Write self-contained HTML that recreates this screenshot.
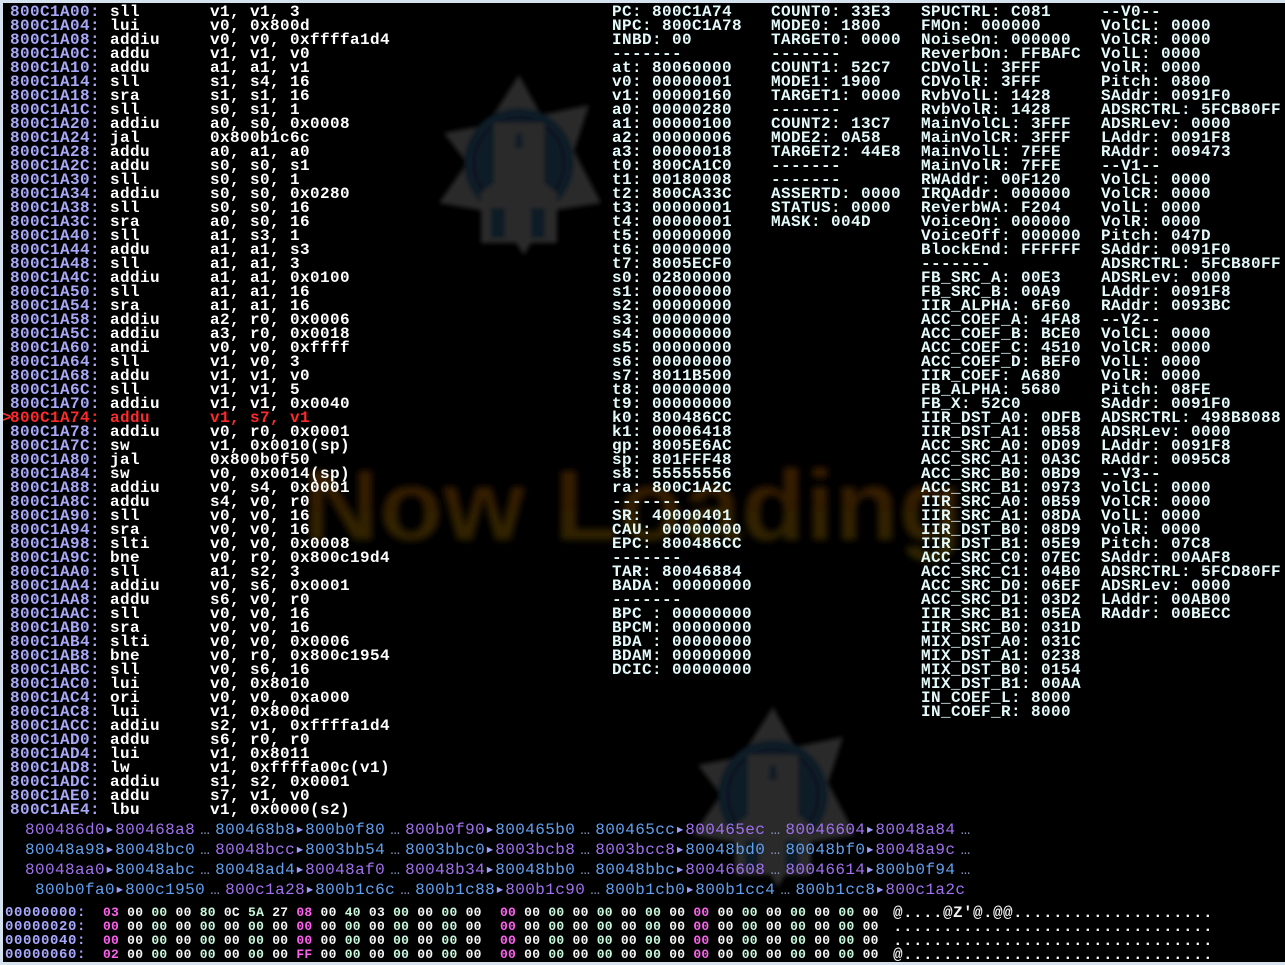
<!DOCTYPE html>
<html><head><meta charset="utf-8"><style>
html,body{margin:0;padding:0;}
body{width:1285px;height:965px;background:#d6e2ee;position:relative;overflow:hidden;}
#scr{position:absolute;left:3px;top:3px;width:1282px;height:959px;background:#000;overflow:hidden;}
pre{position:absolute;margin:0;font-family:"Liberation Mono",monospace;font-size:16px;font-weight:bold;line-height:14px;letter-spacing:0.4px;color:#fff;white-space:pre;}
.a{color:#a8a8f8}
.r{color:#ff2a2a}
.g{color:#e4fafa}
.cs{position:absolute;font-family:"Liberation Mono",monospace;font-size:16px;line-height:16px;letter-spacing:0.4px;white-space:pre;color:#7080c0}
.P{color:#a070f0}.B{color:#60a0f0}.ar{color:#a0a0ff}.el{color:#8090b0;display:inline-block;width:20px;text-align:center;letter-spacing:0}
.hx{position:absolute;margin:0;font-family:"Liberation Mono",monospace;font-size:13px;font-weight:bold;line-height:14px;white-space:pre;letter-spacing:0.25px;}
.w{color:#f4f4f4}.m{color:#c8f8dc}.k{color:#ff60f0}.ha{color:#a8a8ff}
</style></head><body>
<div id="scr">
<svg width="1282" height="959" style="position:absolute;left:0;top:0">
<defs>
<filter id="bl"><feGaussianBlur stdDeviation="2.5"/></filter>
<filter id="bl2"><feGaussianBlur stdDeviation="3.5"/></filter>
<linearGradient id="og" x1="0" y1="0" x2="0" y2="1"><stop offset="0" stop-color="#3a1800"/><stop offset="1" stop-color="#2c2600"/></linearGradient>
<g id="logo">
<polygon points="0,-88 22,-48 70,-58 55,-12 82,40 30,48 5,92 -22,50 -80,40 -52,0 -75,-30 -32,-38" fill="#2a2a2a"/>
<circle r="55" fill="#0c1a28"/>
<circle r="45" fill="none" stroke="#0a1420" stroke-width="4"/>
<path d="M-25,-40 L25,-40 L25,20 L38,30 L38,80 L-38,80 L-38,30 L-25,20 Z" fill="#2a2a2a"/>
<rect x="-28" y="45" width="14" height="30" fill="#0c1a28"/><rect x="12" y="45" width="14" height="30" fill="#0c1a28"/>
<path d="M-3,-30 L3,-30 L4,-15 L-4,-15Z" fill="#0c1a28"/>
</g>
</defs>
<use href="#logo" x="516" y="160" filter="url(#bl)"/>
<use href="#logo" x="770" y="792" filter="url(#bl)"/>
<text x="300" y="537" font-family="Liberation Sans,sans-serif" font-weight="bold" font-size="100" textLength="660" lengthAdjust="spacingAndGlyphs" fill="url(#og)" filter="url(#bl2)">Now Loading</text>
</svg>

<pre style="left:7px;top:2px"><span class="a">800C1A00:</span> sll       v1, v1, 3
<span class="a">800C1A04:</span> lui       v0, 0x800d
<span class="a">800C1A08:</span> addiu     v0, v0, 0xffffa1d4
<span class="a">800C1A0C:</span> addu      v1, v1, v0
<span class="a">800C1A10:</span> addu      a1, a1, v1
<span class="a">800C1A14:</span> sll       s1, s4, 16
<span class="a">800C1A18:</span> sra       s1, s1, 16
<span class="a">800C1A1C:</span> sll       s0, s1, 1
<span class="a">800C1A20:</span> addiu     a0, s0, 0x0008
<span class="a">800C1A24:</span> jal       0x800b1c6c
<span class="a">800C1A28:</span> addu      a0, a1, a0
<span class="a">800C1A2C:</span> addu      s0, s0, s1
<span class="a">800C1A30:</span> sll       s0, s0, 1
<span class="a">800C1A34:</span> addiu     s0, s0, 0x0280
<span class="a">800C1A38:</span> sll       s0, s0, 16
<span class="a">800C1A3C:</span> sra       a0, s0, 16
<span class="a">800C1A40:</span> sll       a1, s3, 1
<span class="a">800C1A44:</span> addu      a1, a1, s3
<span class="a">800C1A48:</span> sll       a1, a1, 3
<span class="a">800C1A4C:</span> addiu     a1, a1, 0x0100
<span class="a">800C1A50:</span> sll       a1, a1, 16
<span class="a">800C1A54:</span> sra       a1, a1, 16
<span class="a">800C1A58:</span> addiu     a2, r0, 0x0006
<span class="a">800C1A5C:</span> addiu     a3, r0, 0x0018
<span class="a">800C1A60:</span> andi      v0, v0, 0xffff
<span class="a">800C1A64:</span> sll       v1, v0, 3
<span class="a">800C1A68:</span> addu      v1, v1, v0
<span class="a">800C1A6C:</span> sll       v1, v1, 5
<span class="a">800C1A70:</span> addiu     v1, v1, 0x0040
<span class="r">800C1A74: addu      v1, s7, v1</span>
<span class="a">800C1A78:</span> addiu     v0, r0, 0x0001
<span class="a">800C1A7C:</span> sw        v1, 0x0010(sp)
<span class="a">800C1A80:</span> jal       0x800b0f50
<span class="a">800C1A84:</span> sw        v0, 0x0014(sp)
<span class="a">800C1A88:</span> addiu     v0, s4, 0x0001
<span class="a">800C1A8C:</span> addu      s4, v0, r0
<span class="a">800C1A90:</span> sll       v0, v0, 16
<span class="a">800C1A94:</span> sra       v0, v0, 16
<span class="a">800C1A98:</span> slti      v0, v0, 0x0008
<span class="a">800C1A9C:</span> bne       v0, r0, 0x800c19d4
<span class="a">800C1AA0:</span> sll       a1, s2, 3
<span class="a">800C1AA4:</span> addiu     v0, s6, 0x0001
<span class="a">800C1AA8:</span> addu      s6, v0, r0
<span class="a">800C1AAC:</span> sll       v0, v0, 16
<span class="a">800C1AB0:</span> sra       v0, v0, 16
<span class="a">800C1AB4:</span> slti      v0, v0, 0x0006
<span class="a">800C1AB8:</span> bne       v0, r0, 0x800c1954
<span class="a">800C1ABC:</span> sll       v0, s6, 16
<span class="a">800C1AC0:</span> lui       v0, 0x8010
<span class="a">800C1AC4:</span> ori       v0, v0, 0xa000
<span class="a">800C1AC8:</span> lui       v1, 0x800d
<span class="a">800C1ACC:</span> addiu     s2, v1, 0xffffa1d4
<span class="a">800C1AD0:</span> addu      s6, r0, r0
<span class="a">800C1AD4:</span> lui       v1, 0x8011
<span class="a">800C1AD8:</span> lw        v1, 0xffffa00c(v1)
<span class="a">800C1ADC:</span> addiu     s1, s2, 0x0001
<span class="a">800C1AE0:</span> addu      s7, v1, v0
<span class="a">800C1AE4:</span> lbu       v1, 0x0000(s2)</pre>
<pre class="r" style="left:-1px;top:408px;color:#ff2a2a">&gt;</pre>

<pre class="g" style="left:609px;top:2px">PC: 800C1A74
NPC: 800C1A78
INBD: 00
-------
at: 80060000
v0: 00000001
v1: 00000160
a0: 00000280
a1: 00000100
a2: 00000006
a3: 00000018
t0: 800CA1C0
t1: 00180008
t2: 800CA33C
t3: 00000001
t4: 00000001
t5: 00000000
t6: 00000000
t7: 8005ECF0
s0: 02800000
s1: 00000000
s2: 00000000
s3: 00000000
s4: 00000000
s5: 00000000
s6: 00000000
s7: 8011B500
t8: 00000000
t9: 00000000
k0: 800486CC
k1: 00006418
gp: 8005E6AC
sp: 801FFF48
s8: 55555556
ra: 800C1A2C
-------
SR: 40000401
CAU: 00000000
EPC: 800486CC
-------
TAR: 80046884
BADA: 00000000
-------
BPC : 00000000
BPCM: 00000000
BDA : 00000000
BDAM: 00000000
DCIC: 00000000</pre>

<pre class="g" style="left:768px;top:2px">COUNT0: 33E3
MODE0: 1800
TARGET0: 0000
-------
COUNT1: 52C7
MODE1: 1900
TARGET1: 0000
-------
COUNT2: 13C7
MODE2: 0A58
TARGET2: 44E8
-------
-------
ASSERTD: 0000
STATUS: 0000
MASK: 004D</pre>

<pre class="g" style="left:918px;top:2px">SPUCTRL: C081
FMOn: 000000
NoiseOn: 000000
ReverbOn: FFBAFC
CDVolL: 3FFF
CDVolR: 3FFF
RvbVolL: 1428
RvbVolR: 1428
MainVolCL: 3FFF
MainVolCR: 3FFF
MainVolL: 7FFE
MainVolR: 7FFE
RWAddr: 00F120
IRQAddr: 000000
ReverbWA: F204
VoiceOn: 000000
VoiceOff: 000000
BlockEnd: FFFFFF
-------
FB_SRC_A: 00E3
FB_SRC_B: 00A9
IIR_ALPHA: 6F60
ACC_COEF_A: 4FA8
ACC_COEF_B: BCE0
ACC_COEF_C: 4510
ACC_COEF_D: BEF0
IIR_COEF: A680
FB_ALPHA: 5680
FB_X: 52C0
IIR_DST_A0: 0DFB
IIR_DST_A1: 0B58
ACC_SRC_A0: 0D09
ACC_SRC_A1: 0A3C
ACC_SRC_B0: 0BD9
ACC_SRC_B1: 0973
IIR_SRC_A0: 0B59
IIR_SRC_A1: 08DA
IIR_DST_B0: 08D9
IIR_DST_B1: 05E9
ACC_SRC_C0: 07EC
ACC_SRC_C1: 04B0
ACC_SRC_D0: 06EF
ACC_SRC_D1: 03D2
IIR_SRC_B1: 05EA
IIR_SRC_B0: 031D
MIX_DST_A0: 031C
MIX_DST_A1: 0238
MIX_DST_B0: 0154
MIX_DST_B1: 00AA
IN_COEF_L: 8000
IN_COEF_R: 8000</pre>

<pre class="g" style="left:1098px;top:2px">--V0--
VolCL: 0000
VolCR: 0000
VolL: 0000
VolR: 0000
Pitch: 0800
SAddr: 0091F0
ADSRCTRL: 5FCB80FF
ADSRLev: 0000
LAddr: 0091F8
RAddr: 009473
--V1--
VolCL: 0000
VolCR: 0000
VolL: 0000
VolR: 0000
Pitch: 047D
SAddr: 0091F0
ADSRCTRL: 5FCB80FF
ADSRLev: 0000
LAddr: 0091F8
RAddr: 0093BC
--V2--
VolCL: 0000
VolCR: 0000
VolL: 0000
VolR: 0000
Pitch: 08FE
SAddr: 0091F0
ADSRCTRL: 498B8088
ADSRLev: 0000
LAddr: 0091F8
RAddr: 0095C8
--V3--
VolCL: 0000
VolCR: 0000
VolL: 0000
VolR: 0000
Pitch: 07C8
SAddr: 00AAF8
ADSRCTRL: 5FCD80FF
ADSRLev: 0000
LAddr: 00AB00
RAddr: 00BECC</pre>

<div class="cs" style="left:22px;top:819px"><span class="P">800486d0</span><span class="ar">▸</span><span class="P">800468a8</span><span class="el">…</span><span class="B">800468b8</span><span class="ar">▸</span><span class="B">800b0f80</span><span class="el">…</span><span class="P">800b0f90</span><span class="ar">▸</span><span class="B">800465b0</span><span class="el">…</span><span class="B">800465cc</span><span class="ar">▸</span><span class="P">800465ec</span><span class="el">…</span><span class="P">80046604</span><span class="ar">▸</span><span class="P">80048a84</span><span class="el">…</span></div>
<div class="cs" style="left:22px;top:839px"><span class="B">80048a98</span><span class="ar">▸</span><span class="B">80048bc0</span><span class="el">…</span><span class="P">80048bcc</span><span class="ar">▸</span><span class="B">8003bb54</span><span class="el">…</span><span class="B">8003bbc0</span><span class="ar">▸</span><span class="P">8003bcb8</span><span class="el">…</span><span class="P">8003bcc8</span><span class="ar">▸</span><span class="B">80048bd0</span><span class="el">…</span><span class="B">80048bf0</span><span class="ar">▸</span><span class="P">80048a9c</span><span class="el">…</span></div>
<div class="cs" style="left:22px;top:859px"><span class="P">80048aa0</span><span class="ar">▸</span><span class="B">80048abc</span><span class="el">…</span><span class="B">80048ad4</span><span class="ar">▸</span><span class="P">80048af0</span><span class="el">…</span><span class="P">80048b34</span><span class="ar">▸</span><span class="B">80048bb0</span><span class="el">…</span><span class="B">80048bbc</span><span class="ar">▸</span><span class="P">80046608</span><span class="el">…</span><span class="P">80046614</span><span class="ar">▸</span><span class="B">800b0f94</span><span class="el">…</span></div>
<div class="cs" style="left:32px;top:879px"><span class="B">800b0fa0</span><span class="ar">▸</span><span class="B">800c1950</span><span class="el">…</span><span class="P">800c1a28</span><span class="ar">▸</span><span class="B">800b1c6c</span><span class="el">…</span><span class="B">800b1c88</span><span class="ar">▸</span><span class="P">800b1c90</span><span class="el">…</span><span class="B">800b1cb0</span><span class="ar">▸</span><span class="B">800b1cc4</span><span class="el">…</span><span class="B">800b1cc8</span><span class="ar">▸</span><span class="P">800c1a2c</span></div>

<pre class="hx ha" style="left:2px;top:903px;font-size:14px;letter-spacing:0.6px">00000000:
00000020:
00000040:
00000060:</pre>
<pre class="hx" style="left:100px;top:903px"><span class="k">03</span> <span class="w">00</span> <span class="m">00</span> <span class="w">00</span> <span class="m">80</span> <span class="w">0C</span> <span class="m">5A</span> <span class="w">27</span> <span class="k">08</span> <span class="w">00</span> <span class="m">40</span> <span class="w">03</span> <span class="m">00</span> <span class="w">00</span> <span class="m">00</span> <span class="w">00</span>
<span class="k">00</span> <span class="w">00</span> <span class="m">00</span> <span class="w">00</span> <span class="m">00</span> <span class="w">00</span> <span class="m">00</span> <span class="w">00</span> <span class="k">00</span> <span class="w">00</span> <span class="m">00</span> <span class="w">00</span> <span class="m">00</span> <span class="w">00</span> <span class="m">00</span> <span class="w">00</span>
<span class="k">00</span> <span class="w">00</span> <span class="m">00</span> <span class="w">00</span> <span class="m">00</span> <span class="w">00</span> <span class="m">00</span> <span class="w">00</span> <span class="k">00</span> <span class="w">00</span> <span class="m">00</span> <span class="w">00</span> <span class="m">00</span> <span class="w">00</span> <span class="m">00</span> <span class="w">00</span>
<span class="k">02</span> <span class="w">00</span> <span class="m">00</span> <span class="w">00</span> <span class="m">00</span> <span class="w">00</span> <span class="m">00</span> <span class="w">00</span> <span class="k">FF</span> <span class="w">00</span> <span class="m">00</span> <span class="w">00</span> <span class="m">00</span> <span class="w">00</span> <span class="m">00</span> <span class="w">00</span></pre>
<pre class="hx" style="left:497px;top:903px"><span class="k">00</span> <span class="w">00</span> <span class="m">00</span> <span class="w">00</span> <span class="m">00</span> <span class="w">00</span> <span class="m">00</span> <span class="w">00</span> <span class="k">00</span> <span class="w">00</span> <span class="m">00</span> <span class="w">00</span> <span class="m">00</span> <span class="w">00</span> <span class="m">00</span> <span class="w">00</span>
<span class="k">00</span> <span class="w">00</span> <span class="m">00</span> <span class="w">00</span> <span class="m">00</span> <span class="w">00</span> <span class="m">00</span> <span class="w">00</span> <span class="k">00</span> <span class="w">00</span> <span class="m">00</span> <span class="w">00</span> <span class="m">00</span> <span class="w">00</span> <span class="m">00</span> <span class="w">00</span>
<span class="k">00</span> <span class="w">00</span> <span class="m">00</span> <span class="w">00</span> <span class="m">00</span> <span class="w">00</span> <span class="m">00</span> <span class="w">00</span> <span class="k">00</span> <span class="w">00</span> <span class="m">00</span> <span class="w">00</span> <span class="m">00</span> <span class="w">00</span> <span class="m">00</span> <span class="w">00</span>
<span class="k">00</span> <span class="w">00</span> <span class="m">00</span> <span class="w">00</span> <span class="m">00</span> <span class="w">00</span> <span class="m">00</span> <span class="w">00</span> <span class="k">00</span> <span class="w">00</span> <span class="m">00</span> <span class="w">00</span> <span class="m">00</span> <span class="w">00</span> <span class="m">00</span> <span class="w">00</span></pre>
<pre class="hx w" style="left:890px;top:903px;font-size:16px;letter-spacing:0.4px">@....@Z'@.@@....................
................................
................................
@...............................</pre>
</div>
</body></html>
